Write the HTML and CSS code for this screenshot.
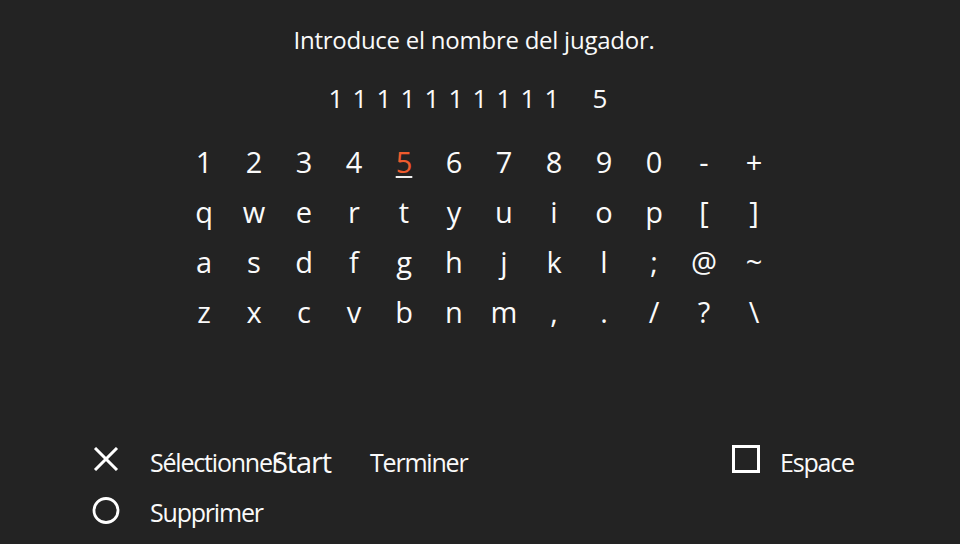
FILE: index.html
```html
<!DOCTYPE html>
<html lang="es">
<head>
<meta charset="utf-8">
<title>Introduce el nombre del jugador</title>
<link rel="stylesheet" href="styles.css">
</head>
<body>
<main class="screen">
  <h1 class="prompt">Introduce el nombre del jugador.</h1>
  <div class="entry">
    <span class="slot">1</span><span class="slot">1</span><span class="slot">1</span><span class="slot">1</span><span class="slot">1</span><span class="slot">1</span><span class="slot">1</span><span class="slot">1</span><span class="slot">1</span><span class="slot">1</span><span class="slot"></span><span class="slot">5</span><span class="slot"></span>
  </div>
  <div class="keyboard">
    <span class="key">1</span><span class="key">2</span><span class="key">3</span><span class="key">4</span><span class="key key-active">5</span><span class="key">6</span><span class="key">7</span><span class="key">8</span><span class="key">9</span><span class="key">0</span><span class="key">-</span><span class="key">+</span>
    <span class="key">q</span><span class="key">w</span><span class="key">e</span><span class="key">r</span><span class="key">t</span><span class="key">y</span><span class="key">u</span><span class="key">i</span><span class="key">o</span><span class="key">p</span><span class="key">[</span><span class="key">]</span>
    <span class="key">a</span><span class="key">s</span><span class="key">d</span><span class="key">f</span><span class="key">g</span><span class="key">h</span><span class="key">j</span><span class="key">k</span><span class="key">l</span><span class="key">;</span><span class="key">@</span><span class="key">~</span>
    <span class="key">z</span><span class="key">x</span><span class="key">c</span><span class="key">v</span><span class="key">b</span><span class="key">n</span><span class="key">m</span><span class="key">,</span><span class="key">.</span><span class="key">/</span><span class="key">?</span><span class="key">\</span>
  </div>
  <footer class="hints">
    <div class="hint">
      <svg class="icon icon-cross" width="26" height="24" viewBox="0 0 26 24" aria-hidden="true">
        <path d="M2 1 L24 23 M24 1 L2 23" stroke="#fff" stroke-width="3" fill="none"/>
      </svg>
      <span class="label">Sélectionner</span>
    </div>
    <div class="hint">
      <span class="button-name">Start</span>
    </div>
    <div class="hint">
      <span class="label">Terminer</span>
    </div>
    <div class="hint hint-right">
      <span class="icon icon-square"></span>
      <span class="label">Espace</span>
    </div>
    <div class="hint">
      <svg class="icon icon-circle" width="28" height="27" viewBox="0 0 28 27" aria-hidden="true">
        <circle cx="14" cy="13.5" r="12" stroke="#fff" stroke-width="2.8" fill="none"/>
      </svg>
      <span class="label">Supprimer</span>
    </div>
  </footer>
</main>
</body>
</html>
```
FILE: styles.css
```css
html, body {
  margin: 0;
  padding: 0;
  background: #232323;
}

body {
  font-family: "Open Sans", "Noto Sans", sans-serif;
  font-weight: 500;
  color: #fafafa;
}

.screen {
  height: 544px;
  box-sizing: border-box;
  padding-top: 25px;
  display: flex;
  flex-direction: column;
}

.prompt {
  margin: 0;
  padding-right: 12px;
  font-size: 24px;
  line-height: 30px;
  font-weight: 500;
  text-align: center;
  letter-spacing: -0.25px;
}

.entry {
  margin-top: 28px;
  display: flex;
  justify-content: center;
}

.slot {
  width: 24px;
  height: 30px;
  font-size: 26px;
  line-height: 30px;
  text-align: center;
}

.keyboard {
  margin-top: 24px;
  display: grid;
  grid-template-columns: repeat(12, 50px);
  grid-auto-rows: 50px;
  justify-content: center;
  padding-right: 2px;
}

.key {
  font-size: 29px;
  line-height: 50px;
  text-align: center;
}

.key-active {
  color: #ee5b2d;
  text-decoration: underline;
  text-decoration-color: #f0f0f0;
  text-decoration-thickness: 2px;
  text-underline-offset: 3px;
}

.hints {
  margin-top: auto;
  margin-bottom: 7px;
  padding-left: 92px;
  display: grid;
  grid-template-columns: 180px 98px 362px auto;
  grid-auto-rows: 50px;
}

.hint {
  display: flex;
  align-items: flex-start;
  gap: 30px;
  white-space: nowrap;
  min-width: 0;
}

.hint-right {
  gap: 20px;
}

.icon {
  flex: none;
  display: block;
}

.icon-cross {
  margin-top: 10px;
  margin-left: 1px;
  margin-right: 1px;
}

.icon-circle {
  margin-top: 10px;
}

.icon-square {
  margin-top: 8px;
  width: 28px;
  height: 28px;
  box-sizing: border-box;
  border: 3px solid #fff;
}

.label {
  font-size: 25px;
  line-height: 50px;
  letter-spacing: -1.2px;
}

.button-name {
  font-size: 29px;
  line-height: 50px;
  letter-spacing: -1.1px;
}
```
